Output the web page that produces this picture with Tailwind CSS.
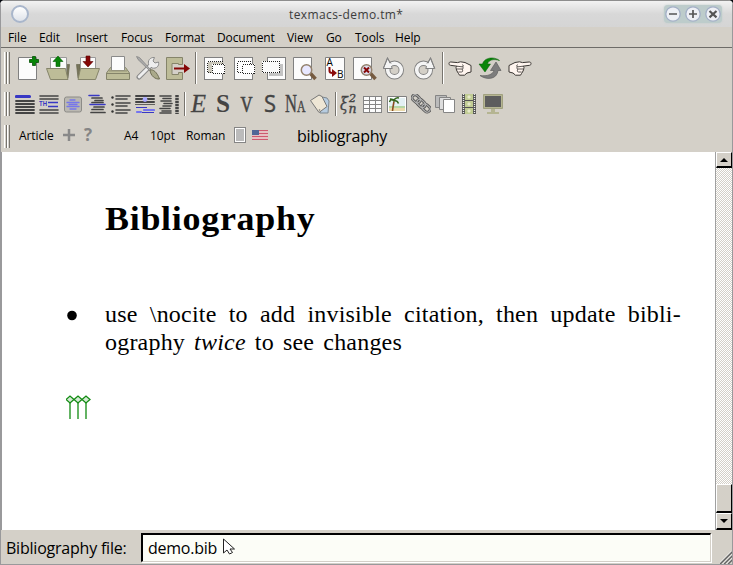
<!DOCTYPE html>
<html lang="en">
<head>
<meta charset="utf-8">
<title>texmacs-demo.tm*</title>
<script src="https://cdn.jsdelivr.net/npm/@tailwindcss/browser@4"></script>
</head>
<body class="w-[733px] h-[565px] overflow-hidden bg-[#05080f] font-['Open_Sans','Noto_Sans',sans-serif] text-black">
<div class="relative w-[733px] h-[565px] flex flex-col overflow-hidden rounded-t-[5px] bg-[#d4d0c8]">

  <header class="h-[27px] shrink-0 flex items-center pl-[11px] pr-[11px] border-t border-[#8d8d8d] bg-linear-to-b from-[#f2f2f2] via-[#d8d8d8] via-50% to-[#d5d5d5]">
    <div class="size-[18px] rounded-full border-2 border-[#a9b6cb] bg-linear-to-b from-white to-[#dfe3ea]"></div>
    <div class="flex-1 h-full pl-[260px] text-[12px] leading-[27px] text-[#3c3c3c] tracking-[0.4px] whitespace-nowrap">texmacs-demo.tm*</div>
    <div class="flex w-[58px] h-[18px] justify-between rounded-[4px] bg-[#bdcccb] px-px items-center shadow-[0_0_2px_#bdcccb]">
      <svg class="size-4" viewBox="0 0 16 16"><circle cx="8" cy="8" r="7.2" fill="#eef0f5" stroke="#a3afc6" stroke-width="1.3"/><path d="M4 8h8" stroke="#555" stroke-width="1.700"/></svg>
      <svg class="size-4" viewBox="0 0 16 16"><circle cx="8" cy="8" r="7.2" fill="#eef0f5" stroke="#a3afc6" stroke-width="1.3"/><path d="M4 8h8M8 4v8" stroke="#555" stroke-width="1.700"/></svg>
      <svg class="size-4" viewBox="0 0 16 16"><circle cx="8" cy="8" r="7.2" fill="#eef0f5" stroke="#a3afc6" stroke-width="1.3"/><path d="M4.500 5l7 6.400M11.500 5l-7 6.400" stroke="#555" stroke-width="2.200"/></svg>
    </div>
  </header>

  <nav class="h-[21px] shrink-0 flex pl-[8px] border-b border-[#6e6c68] text-[12px] leading-[21px] tracking-[-0.1px] whitespace-nowrap">
    <span class="w-[31px]">File</span><span class="w-[37px]">Edit</span><span class="w-[45px]">Insert</span><span class="w-[44px]">Focus</span><span class="w-[52px]">Format</span><span class="w-[70px]">Document</span><span class="w-[39px]">View</span><span class="w-[29px]">Go</span><span class="w-[40px]">Tools</span><span>Help</span>
  </nav>

  <!-- main toolbar -->
  <div class="h-[40px] shrink-0 flex items-center pl-[4px]">
    <svg class="w-[6px] h-[32px] mr-[6px]" viewBox="0 0 6 32" shape-rendering="crispEdges"><path d="M0 0h1v32H0zM3 0h1v32H3z" fill="#fff"/><path d="M2 0h1v32H2zM5 0h1v32H5z" fill="#77746e"/></svg>
    <div class="flex gap-[6px]">
      <svg class="w-[24px] h-[26px]" viewBox="0 0 24 26"><path d="M2.500 2.500h18v22h-18z" fill="#fcfcfc" stroke="#808080"/><path d="M16.500 1.500h3v3h3v3h-3v3h-3v-3h-3v-3h3z" fill="#068606" stroke="#045004" stroke-width=".8"/></svg>
      <svg class="w-[24px] h-[26px]" viewBox="0 0 24 26"><path d="M20 9.500h3.500L22 23l-2 1z" fill="#77745a" stroke="#66654f" stroke-width=".7"/><path d="M4.500 2.500h16v15h-16z" fill="#fbfbfb" stroke="#999"/><path d="M.5 13.500h19l2.500 11H4.500z" fill="#bdbc98" stroke="#85846a"/><path d="M12 1l5 5.500h-3v5h-4v-5H7z" fill="#088408" stroke="#045d04" stroke-width=".6"/></svg>
      <svg class="w-[24px] h-[26px]" viewBox="0 0 24 26"><path d="M4 9.500H.5L2 23l2 1z" fill="#77745a" stroke="#66654f" stroke-width=".7"/><path d="M4.500 2.500h15v15h-15z" fill="#fbfbfb" stroke="#999"/><path d="M4.500 13.500h19l-4 11H2z" fill="#bdbc98" stroke="#85846a"/><path d="M12 12l5-5.500h-3V1h-4v5.500H7z" fill="#850606" stroke="#5e0303" stroke-width=".6"/></svg>
      <svg class="w-[24px] h-[26px]" viewBox="0 0 24 26"><path d="M4.500 12.500h15l4 5.500v6.500H.5V18z" fill="#bdbc98" stroke="#85846a"/><path d="M5.500 1.500h13v14h-13z" fill="#fcfcfc" stroke="#8a8a8a"/><path d="M1 18.500h22" stroke="#85846a"/><path d="M3 15.800h18" stroke="#989678" stroke-width="1.300"/></svg>
      <svg class="w-[24px] h-[26px]" viewBox="0 0 24 26"><path d="M3 22L15 10M3 22L16 9" stroke="#8a8a8a" stroke-width="5" stroke-linecap="round"/><path d="M13 10c-2-4 1-8 5.500-7.500L17 6l2 2 3.500-1c1 4-2 7-6.500 6z" fill="#ededed" stroke="#8b8b8b"/><path d="M3.200 21.800L16 9" stroke="#eee" stroke-width="3" stroke-linecap="round"/><path d="M.5 1.500l3 1 11 12-1 1L2 4.500z" fill="#aaa" stroke="#858585" stroke-width=".8"/><path d="M14 15c3-1 7 2 9.500 9-4 .5-9-3-9.500-9z" fill="#aaa98a" stroke="#6f6e55"/></svg>
      <svg class="w-[24px] h-[26px]" viewBox="0 0 24 26"><path d="M.5 2.500h16v7h-4v-1H6v11h6.500v-2h4v7H.5z" fill="#bdbc98" stroke="#85846a"/><path d="M8 12.500h10V9l6 4.500L18 18v-3.500H8z" fill="#850606"/></svg>
    </div>
    <svg class="w-[2px] h-[32px] ml-[5px] mr-[6px]" viewBox="0 0 2 32" shape-rendering="crispEdges"><path d="M0 0h1v32H0z" fill="#77746e"/><path d="M1 0h1v32H1z" fill="#fff"/></svg>
    <div class="flex gap-[6px]">
      <svg class="w-[24px] h-[26px]" viewBox="0 0 24 26"><g shape-rendering="crispEdges"><path d="M1.500 2.500h18v22h-18z" fill="#fcfcfc" stroke="#808080"/><path d="M4.500 6.500h15v11h-15z" fill="#cbc8bb" stroke="#222" stroke-dasharray="1 1"/><path d="M9.500 9.500h12v9h-12z" fill="#fff" stroke="#fff"/><path d="M9.500 9.500h12v9h-12z" fill="none" stroke="#222" stroke-dasharray="1 1"/></g></svg>
      <svg class="w-[24px] h-[26px]" viewBox="0 0 24 26"><g shape-rendering="crispEdges"><path d="M1.500 2.500h18v22h-18z" fill="#fcfcfc" stroke="#808080"/><path d="M4.500 6.500h13v11h-13z" fill="#fff" stroke="#222" stroke-dasharray="1 1"/><path d="M9.500 9.500h12v9h-12z" fill="#fff" stroke="#fff"/><path d="M9.500 9.500h12v9h-12z" fill="none" stroke="#222" stroke-dasharray="1 1"/></g></svg>
      <svg class="w-[24px] h-[26px] overflow-visible" viewBox="0 0 24 26"><g shape-rendering="crispEdges"><path d="M4.500 2.500h18v22h-18z" fill="#fcfcfc" stroke="#808080"/><path d="M6 9h14v12H6z" fill="#c3c3c3"/><path d="M-.5 6.500h17v11h-17z" fill="#fafafa" stroke="#fff"/><path d="M-.5 6.500h17v11h-17z" fill="none" stroke="#222" stroke-dasharray="1 1"/></g></svg>
      <svg class="w-[24px] h-[26px]" viewBox="0 0 24 26"><path d="M.5 2.500h18v22H.5z" fill="#fcfcfc" stroke="#808080"/><path d="M17.500 18.500l5 5.500" stroke="#765b40" stroke-width="3.500"/><circle cx="13.500" cy="15" r="5.200" fill="#e8e8ff" stroke="#93816c" stroke-width="1.500"/></svg>
      <svg class="w-[24px] h-[26px] overflow-visible" viewBox="0 0 24 26"><path d="M2.500 2.500h19v22h-19z" fill="#fcfcfc" stroke="#808080"/><text x="3.500" y="11" font-family="Open Sans" font-size="10" fill="#000">A</text><text x="14" y="23" font-family="Open Sans" font-size="10" fill="#000">B</text><path d="M6.500 12v4q0 2 3 2" fill="none" stroke="#8b0909" stroke-width="2"/><path d="M9 14l5 4-5 4z" fill="#8b0909"/></svg>
      <svg class="w-[24px] h-[26px]" viewBox="0 0 24 26"><path d="M.5 2.500h18v22H.5z" fill="#fcfcfc" stroke="#808080"/><path d="M17.500 18.500l5 5.500" stroke="#765b40" stroke-width="3.500"/><circle cx="13.500" cy="15" r="5.200" fill="#dde" stroke="#93816c" stroke-width="1.500"/><path d="M11 12.500l5 5m0-5l-5 5" stroke="#850606" stroke-width="2"/></svg>
      <svg class="w-[24px] h-[26px]" viewBox="0 0 24 26"><path d="M5 9.500A8 8 0 1 0 17 8" fill="none"/><circle cx="11.500" cy="15" r="6.800" fill="none" stroke="#808080" stroke-width="5.400"/><path d="M.3 13.500h9L4.500 2.500z" fill="#f5f5f5" stroke="#808080"/><circle cx="11.500" cy="15" r="6.800" fill="none" stroke="#f5f5f5" stroke-width="3.600"/><path d="M.3 13.500L4.500 3.500 8 8.500M1 13.500h7.500" fill="none" stroke="#808080"/><circle cx="11.500" cy="15" r="1.500" fill="#d4d0c8"/></svg>
      <svg class="w-[24px] h-[26px]" viewBox="0 0 24 26"><g transform="matrix(-1 0 0 1 22 0)"><circle cx="11.500" cy="15" r="6.800" fill="none" stroke="#808080" stroke-width="5.400"/><path d="M.3 13.500h9L4.500 2.500z" fill="#f5f5f5" stroke="#808080"/><circle cx="11.500" cy="15" r="6.800" fill="none" stroke="#f5f5f5" stroke-width="3.600"/><path d="M.3 13.500L4.500 3.500 8 8.500M1 13.500h7.500" fill="none" stroke="#808080"/><circle cx="11.500" cy="15" r="1.500" fill="#d4d0c8"/></g></svg>
    </div>
    <svg class="w-[2px] h-[32px] ml-[5px] mr-[4px]" viewBox="0 0 2 32" shape-rendering="crispEdges"><path d="M0 0h1v32H0z" fill="#77746e"/><path d="M1 0h1v32H1z" fill="#fff"/></svg>
    <div class="flex gap-[6px]">
      <svg class="w-[24px] h-[26px]" viewBox="0 0 24 26"><path d="M1 8.500c0-1.200.8-1.500 2-1.500l6.500.6 3-.8 4.500.7 6 3v6.500l-4 1-2.500 2.200h-5l-1-1.700-1-1.500-1-2-.5-2.500 1-1.300-6.500-.9C1.400 10.200 1 9.500 1 8.500z" fill="#fff5ef" stroke="#3a3633"/><path d="M9 11.200l5 .6c2 .2 2-1.800 0-2M9 14h5c1.500 0 1.500-1.500.5-2.200M10.500 17h3c1.500 0 1.500-2 .5-3" fill="none" stroke="#3a3633" stroke-width=".8"/></svg>
      <svg class="w-[24px] h-[26px]" viewBox="0 0 24 26"><path d="M21.500 5.500C16 1 6 2.500 4.500 9H1l6 8 5.500-8H9.500c1-4 6-5.500 12-3.500z" fill="#088508" stroke="#055c05" stroke-width=".5"/><path d="M2 20.500c6 4.500 17 4.500 18-5h3L18 7l-5.500 8.500h3.500c-1 4-7 6-14 5z" fill="#7d7d7d" stroke="#5e5e5e" stroke-width=".7"/></svg>
      <svg class="w-[24px] h-[26px]" viewBox="0 0 24 26"><g transform="matrix(-1 0 0 1 24 0)"><path d="M1 8.500c0-1.200.8-1.500 2-1.500l6.500.6 3-.8 4.500.7 6 3v6.500l-4 1-2.500 2.200h-5l-1-1.700-1-1.500-1-2-.5-2.500 1-1.300-6.500-.9C1.400 10.200 1 9.500 1 8.500z" fill="#fff5ef" stroke="#3a3633"/><path d="M9 11.200l5 .6c2 .2 2-1.800 0-2M9 14h5c1.500 0 1.500-1.500.5-2.200M10.500 17h3c1.500 0 1.500-2 .5-3" fill="none" stroke="#3a3633" stroke-width=".8"/></g></svg>
    </div>
  </div>

  <!-- mode toolbar -->
  <div class="h-[32px] shrink-0 flex items-center pl-[4px]">
    <svg class="w-[6px] h-[24px] mr-[5px]" viewBox="0 0 6 24" shape-rendering="crispEdges"><path d="M0 0h1v24H0zM3 0h1v24H3z" fill="#fff"/><path d="M2 0h1v24H2zM5 0h1v24H5z" fill="#77746e"/></svg>
    <div class="flex gap-[4px]">
      <svg class="size-[20px]" viewBox="0 0 20 20"><path d="M1.500 2.500h13" stroke="#3838c4" stroke-width="3.200" stroke-linecap="round"/><path d="M1 7h18M1 10h18M1 13h18M1 16h18M1 19h18" stroke="#444" stroke-width="1.800" stroke-linecap="round"/></svg>
      <svg class="size-[20px]" viewBox="0 0 20 20"><path d="M1 2h18M1 5h18M1 16h18M1 19h18" stroke="#444" stroke-width="1.600" stroke-linecap="round"/><path d="M9 8.500h10M9 12.500h10" stroke="#3838c4" stroke-width="1.600"/><text x="0" y="12" font-family="Liberation Sans" font-size="7" font-weight="bold" textLength="8" lengthAdjust="spacingAndGlyphs" fill="#3838c4">TH</text></svg>
      <svg class="size-[20px]" viewBox="0 0 20 20"><rect x="1.500" y="3" width="17" height="15" rx="2" fill="#bab8b1" stroke="#8c8b87"/><path d="M7 6h5M4 8.500h12M6 10.500h8M4 12.500h12M7 15h6" stroke="#7676ec" stroke-width="1.300" stroke-linecap="round"/></svg>
      <svg class="size-[20px]" viewBox="0 0 20 20"><path d="M2 1.500h10M3 10.500h15" stroke="#3838c4" stroke-width="1.600" stroke-linecap="round"/><path d="M5 4h10M8 6.500h8M5 8.500h11M7 13h10M5 15.500h11M4 18.500h14" stroke="#444" stroke-width="1.700" stroke-linecap="round"/></svg>
      <svg class="size-[20px]" viewBox="0 0 20 20"><path d="M5 2h14M5 5h11M5 9h14M5 12h11M5 16h14M5 19h11" stroke="#444" stroke-width="1.600" stroke-linecap="round"/><circle cx="1.500" cy="3.500" r="1.200" fill="#333"/><circle cx="1.500" cy="10.500" r="1.200" fill="#333"/><circle cx="1.500" cy="17.500" r="1.200" fill="#333"/></svg>
      <svg class="size-[20px]" viewBox="0 0 20 20"><path d="M1 2h18M1 5h18M1 8h18" stroke="#444" stroke-width="2" stroke-linecap="round"/><path d="M0 10.500h20" stroke="#444" stroke-width=".8"/><circle cx="10" cy="5.500" r="2.400" fill="#aaaaff"/><path d="M1 13.500h11M7 18.500h12" stroke="#3838c4" stroke-width="1"/><path d="M9 16h10M2 18h4" stroke="#7474f0" stroke-width="2.200" stroke-linecap="round"/></svg>
      <svg class="size-[20px]" viewBox="0 0 20 20"><path d="M1 2h11M4 4.500h8M2 7h10M5 9.500h8M4 12h8M1 14.500h10M3 17h9M1 19h11" stroke="#444" stroke-width="1.600" stroke-linecap="round"/><path d="M18 1v19" stroke="#444" stroke-width="3.500" stroke-dasharray="2.200 .8"/></svg>
    </div>
    <svg class="w-[2px] h-[24px] ml-[5px] mr-[4px]" viewBox="0 0 2 24" shape-rendering="crispEdges"><path d="M0 0h1v24H0z" fill="#77746e"/><path d="M1 0h1v24H1z" fill="#fff"/></svg>
    <div class="flex gap-[4px] font-['Liberation_Serif',serif]">
      <svg class="size-[20px] overflow-visible" viewBox="0 0 20 20"><text x="1" y="18" font-size="25" font-style="italic" textLength="15" lengthAdjust="spacingAndGlyphs" fill="#444" stroke="#444" stroke-width=".3">E</text></svg>
      <svg class="size-[20px] overflow-visible" viewBox="0 0 20 20"><text x="2" y="18" font-size="25" font-weight="bold" textLength="14" lengthAdjust="spacingAndGlyphs" fill="#444">S</text></svg>
      <svg class="size-[20px] overflow-visible" viewBox="0 0 20 20"><text x="2.500" y="18" font-size="24" textLength="12" lengthAdjust="spacingAndGlyphs" fill="#444" stroke="#444" stroke-width=".7">V</text></svg>
      <svg class="size-[20px] overflow-visible" viewBox="0 0 20 20"><text x="2" y="18" font-family="Open Sans" font-size="23" textLength="12" lengthAdjust="spacingAndGlyphs" fill="#444" stroke="#444" stroke-width=".4">S</text></svg>
      <svg class="size-[20px] overflow-visible" viewBox="0 0 20 20"><text x="-1" y="18" font-size="25" textLength="12" lengthAdjust="spacingAndGlyphs" fill="#444" stroke="#444" stroke-width=".4">N</text><text x="11" y="18" font-size="17" textLength="8.500" lengthAdjust="spacingAndGlyphs" fill="#444" stroke="#444" stroke-width=".4">A</text></svg>
      <svg class="size-[20px]" viewBox="0 0 20 20"><path d="M12 3l5 1 2 3-1 12h-8z" fill="#b7cce0" stroke="#7f8991"/><path d="M.5 6.500L9 1l3 1.500 5 10-8 6z" fill="#eee6d5" stroke="#777"/><circle cx="9.500" cy="16" r=".8" fill="#777"/></svg>
    </div>
    <svg class="w-[2px] h-[24px] ml-[5px] mr-[2px]" viewBox="0 0 2 24" shape-rendering="crispEdges"><path d="M0 0h1v24H0z" fill="#77746e"/><path d="M1 0h1v24H1z" fill="#fff"/></svg>
    <div class="flex gap-[4px] font-['DejaVu_Serif',serif]">
      <svg class="size-[20px] overflow-visible" viewBox="0 0 20 20"><text x="1" y="16" font-size="19" font-style="italic" textLength="8" lengthAdjust="spacingAndGlyphs" fill="#444" stroke="#444" stroke-width=".3">ξ</text><text x="10" y="8" font-size="11" font-style="italic" textLength="7" lengthAdjust="spacingAndGlyphs" fill="#444" stroke="#444" stroke-width=".4">2</text><text x="9.500" y="19" font-size="12" font-style="italic" textLength="8" lengthAdjust="spacingAndGlyphs" fill="#444" stroke="#444" stroke-width=".4">n</text></svg>
      <svg class="size-[20px]" viewBox="0 0 20 20" shape-rendering="crispEdges"><path d="M.5 2.500h18v16H.5zM.5 6.500h18M.5 10.500h18M.5 14.500h18M6.500 2.500v16M12.500 2.500v16" fill="#fcfcfc" stroke="#858585"/></svg>
      <svg class="size-[20px]" viewBox="0 0 20 20"><path d="M.5 2.500h19v16H.5z" fill="#fff" stroke="#808080"/><path d="M2 4h16v8H2z" fill="#e3f0f3"/><path d="M2 12h16v2H2z" fill="#b5d6a5"/><path d="M2 14h16v3H2z" fill="#ead9ab"/><path d="M7 7.500q-1 5-1.500 9.500" fill="none" stroke="#8a4c20" stroke-width="1.600"/><path d="M7 7Q4 4 2.500 8M7 6q-3-1-4-1M7 6q2-3 5-2M7 7q3-1 4.500 2.500" fill="none" stroke="#35651c" stroke-width="1.500"/></svg>
      <svg class="size-[20px]" viewBox="0 0 20 20"><g fill="none" transform="rotate(43 10 10)"><g stroke="#555" stroke-width="2.800"><rect x="-1.500" y="6.500" width="9" height="6" rx="3"/><rect x="12" y="6.500" width="9" height="6" rx="3"/><rect x="5" y="6.500" width="9.500" height="6" rx="3"/></g><g stroke="#b5b5b5" stroke-width="1.100"><rect x="-1.500" y="6.500" width="9" height="6" rx="3"/><rect x="12" y="6.500" width="9" height="6" rx="3"/><rect x="5" y="6.500" width="9.500" height="6" rx="3"/></g></g></svg>
      <svg class="size-[20px]" viewBox="0 0 20 20"><path d="M.5 1.500h11v12H.5z" fill="#bbb" stroke="#858585"/><path d="M4.500 3.500h11v12h-11z" fill="#ddd" stroke="#858585"/><path d="M8.500 5.500h11v13h-11z" fill="#fff" stroke="#858585"/></svg>
      <svg class="size-[20px]" viewBox="0 0 20 20"><path d="M3 0h14v20H3z" fill="#555"/><path d="M6 0h8v6H6zM6 7h8v6H6zM6 14h8v6H6z" fill="#c1cc94"/><path d="M8 3l2-2 2 2-2 2zM8 10l2-2 2 2-2 2zM8 17l2-2 2 2-2 2z" fill="#e6e8ca"/><path d="M4.500 0v20M15.500 0v20" stroke="#eee" stroke-width="1.300" stroke-dasharray="1 1"/></svg>
      <svg class="size-[20px]" viewBox="0 0 20 20"><path d="M.5.5h19v14H.5z" fill="#b5b592" stroke="#a1a17f"/><path d="M2 2h16v11H2z" fill="#5d5d5d"/><path d="M8 15h4v3h4v2H4v-2h4z" fill="#b5b592"/></svg>
    </div>
  </div>

  <!-- focus toolbar -->
  <div class="h-[32px] shrink-0 flex items-center pl-[4px] text-[12px] leading-[20px] tracking-[-0.1px] whitespace-nowrap">
    <svg class="w-[6px] h-[23px] mr-[9px]" viewBox="0 0 6 23" shape-rendering="crispEdges"><path d="M0 0h1v23H0zM3 0h1v23H3z" fill="#fff"/><path d="M2 0h1v23H2zM5 0h1v23H5z" fill="#77746e"/></svg>
    <span class="w-[44px]">Article</span>
    <svg class="w-[12px] h-[12px] mr-[9px] mb-[2px]" viewBox="0 0 12 12"><path d="M6 0v12M0 6h12" stroke="#898989" stroke-width="2.500"/></svg>
    <span class="w-[40px] text-[17px] font-bold text-[#858585] pb-[2px]">?</span>
    <span class="w-[26px]">A4</span><span class="w-[36px]">10pt</span><span class="w-[48px]">Roman</span>
    <svg class="w-[12px] h-[16px] mr-[6px] mb-[2px]" viewBox="0 0 12 16" shape-rendering="crispEdges"><path d="M.5.5h11v15H.5z" fill="#bbb" stroke="#858585"/><path d="M1.500 1.500h9v13h-9z" fill="none" stroke="#fff"/></svg>
    <svg class="w-[16px] h-[10px] mr-[29px] mb-[2px]" viewBox="0 0 16 10"><path d="M0 0h16v10H0z" fill="#e5c0c3"/><path d="M0 .5h16M0 3.500h16M0 6.500h16M0 9.500h16" stroke="#ce5870"/><path d="M0 0h7v5H0z" fill="#506597"/></svg>
    <span class="text-[16px] tracking-[-0.25px]">bibliography</span>
  </div>

  <main class="h-[378px] shrink-0 flex border-l-2 border-[#99999b] bg-white">
    <article class="flex-1 pl-[64px] font-['Liberation_Serif',serif] flex flex-col">
      <h1 class="mt-[46px] ml-[39px] h-[42px] w-[200px] origin-left scale-x-[1.09] text-[33px] leading-[42px] font-bold tracking-[0.65px] whitespace-nowrap">Bibliography</h1>
      <div class="flex mt-[60px] text-[24px] leading-[28px] whitespace-nowrap">
        <svg class="w-[39px] h-[28px]" viewBox="0 0 39 28"><circle cx="6" cy="15.500" r="4.800"/></svg>
        <div>
          <p class="flex justify-between w-[576px] tracking-[0.2px]"><span>use</span><span>\nocite</span><span>to</span><span>add</span><span>invisible</span><span>citation,</span><span>then</span><span>update</span><span>bibli-</span></p>
          <p class="flex justify-between w-[297px] tracking-[0.2px]"><span>ography</span><i>twice</i><span>to</span><span>see</span><span>changes</span></p>
        </div>
      </div>
      <svg class="w-[25px] h-[25px] mt-[39px]" viewBox="0 0 25 25"><path d="M4 8v16M12 8v16M20 8v16" stroke="#128b12" stroke-width="1.300"/><path d="M0 4.500L4 1l4 3.500L4 8zM8 4.500L12 1l4 3.500L12 8zM16 4.500L20 1l4 3.500L20 8z" fill="#d5ead5" stroke="#128b12" stroke-width="1.300"/></svg>
    </article>
    <aside class="w-[18px] border-x border-[#a0a0a0] flex flex-col bg-[repeating-conic-gradient(#d4d0c8_0_25%,#ffffff_0_50%)] bg-[size:2px_2px]">
      <div class="h-[16px] border border-t-white border-l-white border-b-2 border-b-black border-r-black bg-[#d4d0c8] flex items-center justify-center"><svg class="w-[8px] h-[4px]" viewBox="0 0 8 4"><path d="M0 4l4-4 4 4z"/></svg></div>
      <div class="flex-1"></div>
      <div class="h-[29px] border border-t-white border-l-white border-b-2 border-b-black border-r-black bg-[#d4d0c8]"></div>
      <div class="h-[17px] border border-t-white border-l-white border-b-2 border-b-black border-r-black bg-[#d4d0c8] flex items-center justify-center"><svg class="w-[8px] h-[4px]" viewBox="0 0 8 4"><path d="M0 0h8L4 4z"/></svg></div>
    </aside>
  </main>

  <footer class="h-[35px] shrink-0 flex pl-[5px] pt-[3px] border-b border-l border-[#99999b] text-[16px] leading-[28px] whitespace-nowrap">
    <label class="w-[135px] pt-px tracking-[-0.22px]">Bibliography file:</label>
    <div class="w-[570px] h-[29px] pl-[5px] border-t-2 border-l-2 border-b border-r border-t-black border-l-black border-b-[#d4d0c8] border-r-[#d4d0c8] bg-[#fcfdf7] shadow-[1px_1px_0_#fff] leading-[27px] tracking-[-0.25px]">demo.bib</div>
    <svg class="w-[13px] h-[13px] self-end ml-[9px]" viewBox="0 0 13 13"><path d="M0 13L13 0M4 13l9-9M8 13l5-5" stroke="#666" stroke-width="1.700"/><path d="M-1.500 13L12-.5M2.500 13L13 2.500M6.500 13L13 6.500" stroke="#fff" stroke-width=".8"/></svg>
  </footer>

  <svg class="absolute left-[222px] top-[538px] w-[14px] h-[18px]" viewBox="0 0 14 18"><path d="M1.500 1v14l3.500-3 2.500 4 3-1.500L8 11h4.500z" fill="#fff" stroke="#222"/></svg>
  <div class="absolute right-0 top-[3px] w-px h-[562px] bg-[#99999b]"></div>
  <div class="absolute left-0 top-[3px] w-px h-[562px] bg-[#99999b]"></div>
</div>
</body>
</html>
